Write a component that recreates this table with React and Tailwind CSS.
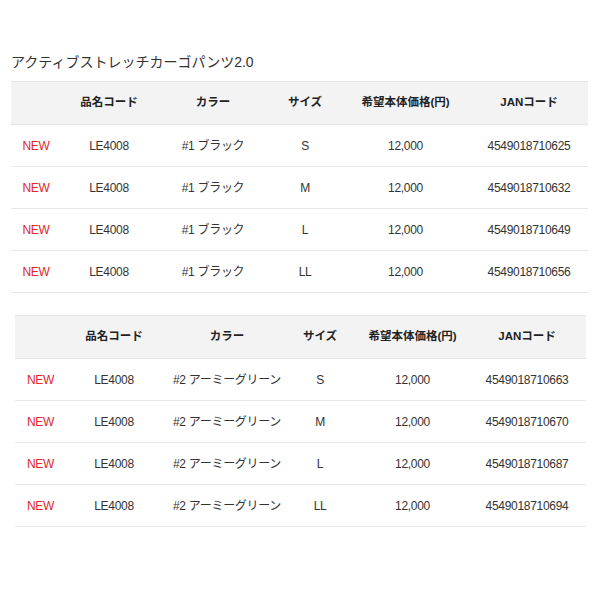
const headers = ["", "品名コード", "カラー", "サイズ", "希望本体価格(円)", "JANコード"];

const tables = [
  {
    wrap: "ml-[11px] w-[577px]",
    widths: ["w-[50px]", "w-[96px]", "w-[112px]", "w-[72px]", "w-[129px]", "w-[118px]"],
    color: "#1 ブラック",
    rows: [
      ["S", "4549018710625"],
      ["M", "4549018710632"],
      ["L", "4549018710649"],
      ["LL", "4549018710656"],
    ],
  },
  {
    wrap: "ml-[15px] w-[571px] mt-[22px]",
    widths: ["w-[51px]", "w-[96px]", "w-[130px]", "w-[56px]", "w-[129px]", "w-[109px] pr-[9px]"],
    color: "#2 アーミーグリーン",
    rows: [
      ["S", "4549018710663"],
      ["M", "4549018710670"],
      ["L", "4549018710687"],
      ["LL", "4549018710694"],
    ],
  },
];

function SpecTable({ t }) {
  return (
    <table className={`${t.wrap} table-fixed border-collapse`}>
      <thead>
        <tr className="h-[43px] bg-[#f3f3f3] border-t border-b border-[#e4e4e4]">
          {headers.map((h, i) => (
            <th key={i} className={`${t.widths[i]} text-center text-[11.5px] font-bold text-[#222]`}>
              {h}
            </th>
          ))}
        </tr>
      </thead>
      <tbody>
        {t.rows.map(([size, jan]) => (
          <tr key={jan} className="h-[42px] border-b border-[#e8e8e8] text-[12px] text-[#333] tracking-[-0.3px]">
            <td className="text-center text-[#e2262a]">NEW</td>
            <td className="text-center">LE4008</td>
            <td className="text-center">{t.color}</td>
            <td className="text-center">{size}</td>
            <td className="text-center">12,000</td>
            <td className={`text-center ${t.widths[5].includes("pr-") ? "pr-[9px]" : ""}`}>{jan}</td>
          </tr>
        ))}
      </tbody>
    </table>
  );
}

export default function App() {
  return (
    <div
      className="w-[600px] h-[600px] bg-white pt-[52px]"
      style={{ fontFamily: '"Liberation Sans", "Noto Sans CJK JP", sans-serif' }}
    >
      <div className="ml-[11px] h-[29px] text-[14px] text-[#333] leading-[20px]">
        アクティブストレッチカーゴパンツ2.0
      </div>
      <SpecTable t={tables[0]} />
      <SpecTable t={tables[1]} />
    </div>
  );
}
